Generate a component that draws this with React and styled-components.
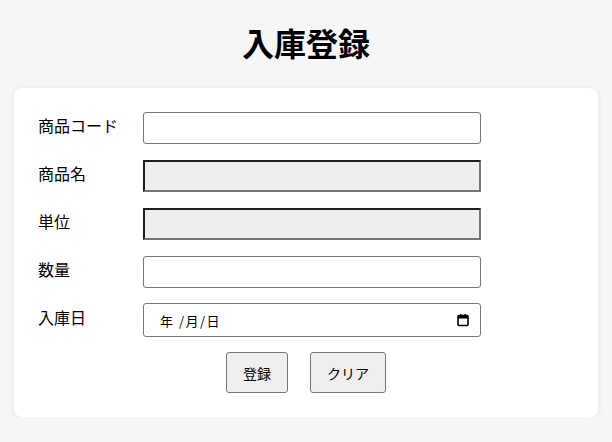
import React from 'react';
import styled, { createGlobalStyle } from 'styled-components';

const GlobalStyle = createGlobalStyle`
  body {
    margin: 0;
    background: #f6f6f6;
    font-family: "Noto Sans CJK JP", "Noto Sans", sans-serif;
    color: #000;
  }
`;

function CalendarIcon() {
    return (
        <svg width="14" height="14" viewBox="0 0 14 14">
            <rect x="2" y="2.5" width="10" height="10" rx="1" fill="none" stroke="#000" strokeWidth="1.6" />
            <rect x="2" y="2.5" width="10" height="3" fill="#000" />
            <rect x="4" y="1" width="1.4" height="2.5" fill="#000" />
            <rect x="8.6" y="1" width="1.4" height="2.5" fill="#000" />
        </svg>
    );
}

const fields = [
    { label: '商品コード', readOnly: false },
    { label: '商品名', readOnly: true },
    { label: '単位', readOnly: true },
    { label: '数量', readOnly: false },
];

function App() {
    return (
        <Page>
            <GlobalStyle />
            <Title>入庫登録</Title>
            <Card>
                {fields.map((f) => (
                    <Row key={f.label}>
                        <Label>{f.label}</Label>
                        <TextInput readOnly={f.readOnly} $readOnly={f.readOnly} />
                    </Row>
                ))}
                <Row>
                    <Label>入庫日</Label>
                    <DateBox>
                        <DateText>年 /月/日</DateText>
                        <CalendarIcon />
                    </DateBox>
                </Row>
                <Buttons>
                    <Button>登録</Button>
                    <Button>クリア</Button>
                </Buttons>
            </Card>
        </Page>
    );
}

export default App;

const Page = styled.div`
    padding: 0 14px;
`;

const Title = styled.h1`
    margin: 0;
    padding: 25px 0 29px;
    text-align: center;
    font-size: 32px;
    line-height: 34px;
    font-weight: 700;
`;

const Card = styled.div`
    background: #fff;
    border-radius: 8px;
    box-shadow: 0 1px 6px rgba(0, 0, 0, 0.08);
    padding: 24px 24px 24px;
    display: flex;
    flex-direction: column;
    gap: 16px;
`;

const Row = styled.div`
    display: flex;
    align-items: center;
    height: 32px;
`;

const Label = styled.label`
    width: 105px;
    font-size: 16px;
    line-height: 20px;
    margin-top: -6px;
`;

const TextInput = styled.input`
    box-sizing: border-box;
    width: 338px;
    height: 32px;
    font-size: 14px;
    padding: 0 8px;
    outline: none;
    border-radius: ${(p) => (p.$readOnly ? '0' : '3px')};
    border-style: solid;
    border-width: ${(p) => (p.$readOnly ? '2px' : '1px')};
    border-color: ${(p) => (p.$readOnly ? '#1e1e1e #767676 #767676 #1e1e1e' : '#767676')};
    background: ${(p) => (p.$readOnly ? '#eeeeee' : '#fff')};
`;

const DateBox = styled.div`
    box-sizing: border-box;
    width: 338px;
    height: 34px;
    border: 1px solid #767676;
    border-radius: 3px;
    display: flex;
    align-items: center;
    justify-content: space-between;
    padding: 0 10px 0 16px;
`;

const DateText = styled.span`
    font-size: 13px;
    letter-spacing: 1.5px;
    white-space: pre;
`;

const Buttons = styled.div`
    display: flex;
    justify-content: center;
    gap: 22px;
`;

const Button = styled.button`
    box-sizing: border-box;
    height: 41px;
    padding: 0 16px;
    font-family: "Noto Sans CJK JP", "Noto Sans", sans-serif;
    font-size: 14px;
    background: #efefef;
    border: 1px solid #767676;
    border-radius: 3px;
    color: #000;
`;
